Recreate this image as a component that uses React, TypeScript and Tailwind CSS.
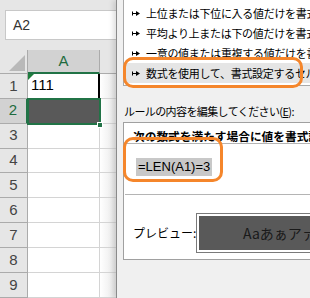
import React from 'react';

const JP = '"Meiryo UI", "Noto Sans CJK JP", sans-serif';
const LAT = '"Liberation Sans", Arial, sans-serif';

const rules = [
  '上位または下位に入る値だけを書式設定',
  '平均より上または下の値だけを書式設定',
  '一意の値または重複する値だけを書式設定',
  '数式を使用して、書式設定するセルを決定',
];

function Pointer() {
  return (
    <svg width="8" height="5" viewBox="0 0 8 5" className="shrink-0">
      <rect x="0" y="0.5" width="1" height="4" fill="#000" />
      <rect x="0" y="2" width="5" height="1" fill="#000" />
      <path d="M4 0 L8 2.5 L4 5 Z" fill="#000" />
    </svg>
  );
}

function Sheet() {
  const rows = [1, 2, 3, 4, 5, 6, 7, 8, 9];
  return (
    <div className="w-[116px] shrink-0 flex flex-col bg-[#e6e6e6]" style={{ fontFamily: LAT }}>
      <div className="h-[50px] pt-[10px] pl-[5px]">
        <div className="h-[30px] bg-white border border-[#c8c8c8] border-r-0 flex items-center pl-[7px] text-[14px] text-[#333]">
          A2
        </div>
      </div>
      <div className="flex h-[24px]">
        <div className="w-[28px] relative border-r border-b border-[#ababab]">
          <svg width="16" height="16" viewBox="0 0 16 16" className="absolute right-[2px] bottom-[2px]">
            <path d="M16 0 L16 16 L0 16 Z" fill="#b9b9b9" />
          </svg>
        </div>
        <div className="w-[72px] bg-[#d2d2d2] border-r border-[#ababab] border-b-2 border-b-[#217346] flex items-center justify-center text-[15px] text-[#1e6b3e]">
          A
        </div>
        <div className="flex-1 border-b border-[#ababab]" />
      </div>
      {rows.map((r) => (
        <div key={r} className="flex h-[25px]">
          <div
            className={
              r === 2
                ? 'w-[28px] bg-[#d2d2d2] border-r-2 border-r-[#217346] border-b border-b-[#ababab] flex items-center justify-center text-[15px] text-[#1e6b3e]'
                : 'w-[28px] border-r border-b border-[#ababab] flex items-center justify-center text-[15px] text-[#444]'
            }
          >
            {r}
          </div>
          {r === 1 && (
            <div className="w-[72px] bg-white border-r-2 border-r-black border-b border-b-[#d4d4d4] relative flex items-end pl-[3px] pb-[1px] text-[15px] text-black">
              <svg width="6" height="6" viewBox="0 0 6 6" className="absolute left-0 top-0">
                <path d="M0 0 L6 0 L0 6 Z" fill="#1e7d3c" />
              </svg>
              111
            </div>
          )}
          {r === 2 && (
            <div className="w-[72px] bg-[#595959] relative">
              <div className="absolute -left-[1px] -top-[1px] -right-[1px] -bottom-[1px] border-2 border-[#217346]" />
              <div className="absolute -right-[3px] -bottom-[4px] w-[6px] h-[6px] bg-[#217346] border border-white" />
            </div>
          )}
          {r > 2 && <div className="w-[72px] bg-white border-r border-b border-[#d4d4d4]" />}
          <div className="flex-1 bg-gradient-to-r from-white to-[#e8e8e8] border-b border-[#d4d4d4]" />
        </div>
      ))}
    </div>
  );
}

function RuleDialog() {
  return (
    <div
      className="flex-1 relative overflow-hidden bg-[#f0f0f0] border-l border-[#8a8a8a] shadow-[-3px_0_5px_rgba(0,0,0,0.12)]"
      style={{ fontFamily: JP }}
    >
      <div className="ml-[6px] w-[187px] h-[86px] bg-white border-l border-b border-[#a9a9a9] pt-[3px] overflow-hidden">
        {rules.map((t, i) => (
          <div
            key={t}
            className={
              'h-[20px] flex items-center gap-[6px] pl-[8px] whitespace-nowrap text-[11px] tracking-[-0.3px] text-black ' +
              (i === 3 ? 'bg-[#e5e5e5]' : 'bg-white')
            }
          >
            <Pointer />
            <span>{t}</span>
          </div>
        ))}
      </div>

      <div className="mt-[18px] ml-[7px] h-[14px] leading-[14px] text-[11px] tracking-[-0.6px] text-black whitespace-nowrap">
        ルールの内容を編集してください(<span className="underline">E</span>):
      </div>

      <div className="mt-[4px] ml-[6px] w-[187px] h-[138px] bg-white border border-[#a0a0a0] border-r-0 overflow-hidden">
        <div className="pt-[6px] pl-[9px] h-[20px] leading-[13px] text-[11.7px] font-bold text-black whitespace-nowrap">
          次の数式を満たす場合に値を書式設定
        </div>
        <div className="ml-[1px] h-[52px] border-t border-b border-[#b4b4b4] flex items-end pb-[18px] pl-[11px]">
          <span className="bg-[#c8c8c8] px-[2px] leading-[18px] text-[13px] text-black" style={{ fontFamily: LAT }}>
            =LEN(A1)=3
          </span>
        </div>
        <div className="flex items-center mt-[18px] pl-[9px]">
          <span className="w-[63px] text-[12px] text-black whitespace-nowrap">プレビュー:</span>
          <div className="w-[140px] h-[40px] border border-[#7a7a7a] p-[2px] bg-white shrink-0">
            <div className="h-full bg-[#595959] flex items-center pl-[44px] text-[14px] text-[#1a1a1a] whitespace-nowrap overflow-hidden">
              Aaあぁアァ
            </div>
          </div>
        </div>
      </div>

      <div className="absolute left-[6px] top-[57px] w-[180px] h-[31px] border-[3px] border-[#f5862b] rounded-[10px]" />
      <div className="absolute left-[6px] top-[137px] w-[100px] h-[45px] border-[3px] border-[#f5862b] rounded-[10px]" />
    </div>
  );
}

export default function App() {
  return (
    <div className="flex w-[310px] h-[298px] overflow-hidden bg-white">
      <Sheet />
      <RuleDialog />
    </div>
  );
}
